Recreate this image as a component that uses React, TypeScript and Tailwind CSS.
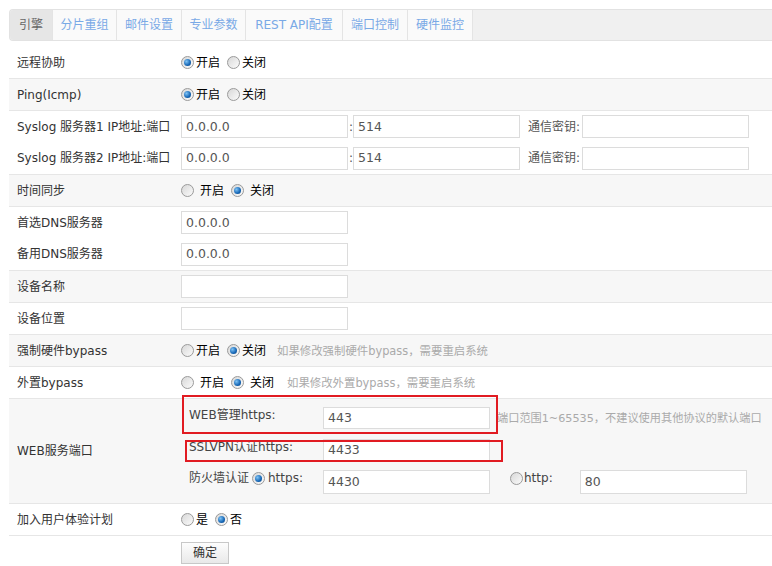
import type { ReactNode } from "react";

const tabs = ["引擎", "分片重组", "邮件设置", "专业参数", "REST API配置", "端口控制", "硬件监控"];
const tabWidths = ["w-[43px]", "w-[64px]", "w-[65px]", "w-[64px]", "w-[97px]", "w-[65px]", "w-[65px]"];

function Radio({ checked }: { checked?: boolean }) {
  return (
    <span className="inline-flex h-[13px] w-[13px] shrink-0 items-center justify-center rounded-full border border-[#9a9a9a] bg-gradient-to-br from-[#d8d8d8] to-[#fbfbfb]">
      {checked && <span className="h-[7px] w-[7px] rounded-full bg-[radial-gradient(circle_at_35%_35%,#7fc3f5,#1566b5_60%,#0b3f7a)]" />}
    </span>
  );
}

function Choice({ items, spaced }: { items: [string, boolean][]; spaced?: boolean }) {
  return (
    <div className="flex items-center gap-[7px]">
      {items.map(([label, on]) => (
        <label key={label} className={`flex items-center ${spaced ? "gap-[6px]" : "gap-[2px]"}`}>
          <Radio checked={on} />
          <span>{label}</span>
        </label>
      ))}
    </div>
  );
}

function Input({ value = "", h = "h-[23px]" }: { value?: string; h?: string }) {
  return (
    <div className={`w-[167px] ${h} flex shrink-0 items-center border border-[#dcdcdc] bg-white pl-[4px] text-[12.5px] text-[#555]`}>
      {value}
    </div>
  );
}

function Row({ label, gray, children }: { label: string; gray?: boolean; children: ReactNode }) {
  return (
    <div className={`flex h-[32px] border-t border-[#e6e6e6] ${gray ? "bg-[#f7f7f7]" : "bg-white"}`}>
      <div className="flex w-[172px] shrink-0 items-center pl-[8px] text-[#333]">{label}</div>
      <div className="flex flex-1 items-center whitespace-nowrap">{children}</div>
    </div>
  );
}

// two lines sharing one cell: 31 + 32 plus the top border
function Line({ label, first, children }: { label: string; first?: boolean; children: ReactNode }) {
  return (
    <div className={`flex ${first ? "h-[31px]" : "h-[32px]"}`}>
      <div className="flex w-[172px] shrink-0 items-center whitespace-nowrap pl-[8px] text-[#333]">{label}</div>
      <div className="flex flex-1 items-center">{children}</div>
    </div>
  );
}

function SyslogLine({ label, first }: { label: string; first?: boolean }) {
  return (
    <Line label={label} first={first}>
      <Input value="0.0.0.0" />
      <span className="w-[5px] shrink-0 pl-[1px] text-[#555]">:</span>
      <Input value="514" />
      <span className="ml-[8px] w-[54px] shrink-0 text-[#555]">通信密钥:</span>
      <Input />
    </Line>
  );
}

export default function App() {
  return (
    <div className="h-[566px] w-[772px] overflow-hidden bg-white font-['DejaVu_Sans','Noto_Sans_CJK_SC',sans-serif] text-[12px] leading-[14px]">
      <div className="pl-[9px] pt-[9px]">
        <div className="flex h-[32px] rounded-l-[4px] border border-r-0 border-[#e2e2e2] bg-[#f0f0f0]">
          {tabs.map((t, i) => (
            <div
              key={t}
              className={`${tabWidths[i]} flex items-center justify-center border-r border-[#e4e4e4] ${
                i === 0 ? "rounded-l-[4px] bg-[#e6e6e6] text-[#666]" : "bg-[#fafafa] text-[#79a9e6]"
              }`}
            >
              {t}
            </div>
          ))}
        </div>

        <div className="mt-[6px]">
          <div className="flex h-[31px]">
            <div className="flex w-[172px] shrink-0 items-center pl-[8px] text-[#333]">远程协助</div>
            <div className="flex items-center">
              <Choice items={[["开启", true], ["关闭", false]]} />
            </div>
          </div>
          <Row label="Ping(Icmp)" gray>
            <Choice items={[["开启", true], ["关闭", false]]} />
          </Row>
          <div className="border-t border-[#e6e6e6]">
            <SyslogLine label="Syslog 服务器1 IP地址:端口" first />
            <SyslogLine label="Syslog 服务器2 IP地址:端口" />
          </div>
          <Row label="时间同步" gray>
            <Choice spaced items={[["开启", false], ["关闭", true]]} />
          </Row>
          <div className="border-t border-[#e6e6e6]">
            <Line label="首选DNS服务器" first>
              <Input value="0.0.0.0" />
            </Line>
            <Line label="备用DNS服务器">
              <Input value="0.0.0.0" />
            </Line>
          </div>
          <Row label="设备名称" gray>
            <Input />
          </Row>
          <Row label="设备位置">
            <Input />
          </Row>
          <Row label="强制硬件bypass" gray>
            <Choice items={[["开启", false], ["关闭", true]]} />
            <span className="ml-[11px] text-[11.4px] text-[#aaa]">如果修改强制硬件bypass，需要重启系统</span>
          </Row>
          <Row label="外置bypass">
            <Choice spaced items={[["开启", false], ["关闭", true]]} />
            <span className="ml-[13px] text-[11.4px] text-[#aaa]">如果修改外置bypass，需要重启系统</span>
          </Row>

          <div className="relative flex h-[105px] border-t border-[#e6e6e6] bg-[#f7f7f7]">
            <div className="flex w-[172px] shrink-0 items-center pl-[8px] text-[#333]">WEB服务端口</div>
            <div className="flex flex-1 flex-col pt-[8px] text-[#444]">
              <div className="flex h-[32px] items-start whitespace-nowrap">
                <span className="w-[142px] shrink-0 pl-[8px] pt-[1px]">WEB管理https:</span>
                <Input value="443" h="h-[22px]" />
                <span className="ml-[7px] pt-[5px] text-[11.2px] text-[#aaa]">端口范围1~65535，不建议使用其他协议的默认端口</span>
              </div>
              <div className="flex h-[31px] items-start">
                <span className="w-[142px] shrink-0 pl-[8px] pt-[1px]">SSLVPN认证https:</span>
                <Input value="4433" h="h-[22px]" />
              </div>
              <div className="flex items-start">
                <span className="flex w-[142px] shrink-0 items-center gap-[3px] pl-[8px] pt-[1px]">
                  防火墙认证
                  <Radio checked />
                  https:
                </span>
                <Input value="4430" h="h-[24px]" />
                <span className="ml-[20px] flex items-center gap-[1px] pt-[1px]">
                  <Radio />
                  http:
                </span>
                <span className="ml-[27px]">
                  <Input value="80" h="h-[24px]" />
                </span>
              </div>
            </div>
            <div className="pointer-events-none absolute left-[173px] top-[-4px] h-[39px] w-[316px] border-2 border-[#e11b22]" />
            <div className="pointer-events-none absolute left-[176px] top-[41px] h-[22px] w-[318px] border-2 border-[#e11b22]" />
          </div>

          <Row label="加入用户体验计划">
            <Choice items={[["是", false], ["否", true]]} />
          </Row>
          <div className="flex border-t border-[#e6e6e6] pl-[172px] pt-[6px]">
            <button className="h-[22px] w-[48px] border border-[#c8c8c8] bg-gradient-to-b from-[#fdfdfd] to-[#e9e9e9] text-[12px] text-[#333]">
              确定
            </button>
          </div>
        </div>
      </div>
    </div>
  );
}
